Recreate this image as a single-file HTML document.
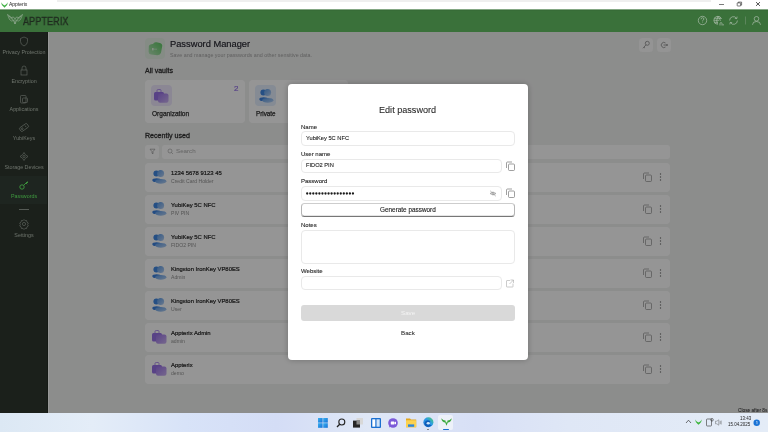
<!DOCTYPE html>
<html><head><meta charset="utf-8">
<style>
*{margin:0;padding:0;box-sizing:border-box}
html,body{width:768px;height:432px;overflow:hidden;background:#f5f6f5;font-family:"Liberation Sans",sans-serif;-webkit-font-smoothing:antialiased}
.t{will-change:transform}
.a{position:absolute}
.t{position:absolute;white-space:nowrap;line-height:1}
#titlebar{left:0;top:0;width:768px;height:9px;background:#fff}
#header{left:0;top:9px;width:768px;height:23px;background:#3a713a}
#side{left:0;top:32px;width:48px;height:381px;background:#1b201b}
#main{left:48px;top:32px;width:720px;height:381px;background:#eff0ef}
#overlay{left:48px;top:32px;width:720px;height:381px;background:rgba(0,0,0,0.41)}
#taskbar{left:0;top:413px;width:768px;height:19px;background:linear-gradient(90deg,#dce8f4 0%,#e4edf8 12%,#d8e3f8 24%,#d4ddf6 36%,#dfe7f6 48%,#d8e0f6 62%,#dfe7f6 74%,#e4ecf7 100%)}
.sl{font-size:5.35px;color:#535853;text-align:center;width:48px;left:0}
.card{position:absolute;background:#fefefe;border-radius:4px}
.row{position:absolute;left:145px;width:525px;height:29px;background:#fcfcfc;border-radius:4px}
.rt{font-size:5.9px;color:#262626;-webkit-text-stroke:0.2px #262626}
.rs{font-size:5.1px;color:#8f8f8f}
#modal{left:288px;top:84px;width:240px;height:276px;background:#fff;border-radius:4px;box-shadow:0 0 6px rgba(0,0,0,0.25)}
.ml{font-size:6px;color:#2a2a2a;-webkit-text-stroke:0.12px #2a2a2a}
.inp{position:absolute;border:1px solid #e9e9e9;border-radius:4px;background:#fff}
.it{font-size:5.7px;color:#222;-webkit-text-stroke:0.1px #222}
</style></head><body>
<div id="titlebar" class="a">
<svg class="a" style="left:0.5px;top:1.5px" width="7" height="6" viewBox="0 0 7 6"><path d="M0.2 0.2 Q1.5 2.5 3.5 3.5 Q5.5 2.5 6.8 0.2 Q6.6 3.6 4.6 4.6 L3.5 5.8 L2.4 4.6 Q0.4 3.6 0.2 0.2 Z" fill="#3fb043"/></svg>
<div class="t" style="left:9px;top:2px;font-size:5px;color:#222">Appterix</div>
<div class="a" style="left:57px;top:0;width:654px;height:1.5px;background:#efefef"></div>
<svg class="a" style="left:715px;top:0" width="53" height="9" viewBox="0 0 53 9"><g fill="none" stroke="#222" stroke-width="0.6">
<path d="M4 4.5 H9"/>
<rect x="22.2" y="2.9" width="3.4" height="3.1" rx="0.4"/><path d="M23.2 2.9 V2.1 H26.6 V5.1 H25.6"/>
<path d="M41 2.1 L45 5.9 M45 2.1 L41 5.9" stroke-width="0.75"/></g></svg>
</div>
<div id="header" class="a">
<div class="a" style="left:0;top:0;width:768px;height:1px;background:#84a784"></div><div class="a" style="left:0;top:1px;width:768px;height:1px;background:#376c37"></div>
<svg class="a" style="left:6.5px;top:5.3px" width="16" height="11" viewBox="0 0 16 11"><g fill="none" stroke="#a9b7a9" stroke-width="0.55" stroke-linejoin="round">
<path d="M0.5 0.5 L4.5 3.5 L6.5 3 L8 5 L9.5 3 L11.5 3.5 L15.5 0.5 L13.5 5.5 L11.5 7 L9.5 6.5 L8 10 L6.5 6.5 L4.5 7 L2.5 5.5 Z"/>
<path d="M2 2 L5 5.5 M14 2 L11 5.5 M4.5 3.5 L6.5 6.5 M11.5 3.5 L9.5 6.5 M8 5 V10"/>
</g></svg>
<div class="t" style="left:23px;top:7.5px;font-size:10px;color:#1f2a1f;letter-spacing:0.15px;-webkit-text-stroke:0.35px #1f2a1f;transform:scaleX(0.9);transform-origin:0 0">APPTERIX</div>
<svg class="a" style="left:697px;top:5px" width="70" height="13" viewBox="0 0 70 13">
<g fill="none" stroke="#b3c3b3" stroke-width="0.65">
<circle cx="5.5" cy="6.5" r="4.2"/>
<path d="M4.1 5.3 Q4.1 3.7 5.5 3.7 Q6.9 3.7 6.9 5 Q6.9 5.9 5.6 6.6 V7.4 M5.6 8.5 V9"/>
<path d="M24.6 5 A4 4 0 1 0 20.5 10.3"/><path d="M17 6.3 H22 M21 2.3 Q18.6 6.3 20.5 10.3 M21 2.3 Q23.2 5 23.4 7 M17.6 4.3 H24.2 M17.6 8.3 H21"/>
<path d="M23 11.5 V9.6 Q23 8.6 24 8.6 Q25 8.6 25 9.6 V11.5 M26.2 11.5 V10"/>
<g transform="translate(1,0)"><path d="M31.6 6.5 A3.8 3.8 0 0 1 38.6 4.4"/><path d="M39.1 2.6 L38.8 4.6 L36.8 4.4"/>
<path d="M39.4 6.5 A3.8 3.8 0 0 1 32.4 8.6"/><path d="M31.9 10.4 L32.2 8.4 L34.2 8.6"/></g>
</g>
<path d="M48.5 2.5 V10.5" stroke="#7f9d7f" stroke-width="0.5"/>
<g fill="none" stroke="#b3c3b3" stroke-width="0.65"><circle cx="59.5" cy="4.8" r="2.3"/><path d="M55.5 10.8 Q55.5 7.5 59.5 7.5 Q63.5 7.5 63.5 10.8"/></g>
</svg>
</div>
<div id="side" class="a">
<div class="a" style="left:0;top:143.5px;width:48px;height:28.5px;background:#1e2520"></div>
<div class="t sl" style="top:17.5px;color:#70766f">Privacy Protection</div>
<div class="t sl" style="top:46.5px;color:#70766f">Encryption</div>
<div class="t sl" style="top:74.9px;color:#70766f">Applications</div>
<div class="t sl" style="top:103.5px;color:#70766f">YubiKeys</div>
<div class="t sl" style="top:132.8px;color:#70766f">Storage Devices</div>
<div class="t sl" style="top:161.5px;color:#3f9a3f">Passwords</div>
<div class="t sl" style="top:200.5px;color:#70766f">Settings</div>
<div class="a" style="left:19px;top:177px;width:10px;height:0.6px;background:#555a55"></div>
<svg class="a" style="left:0;top:0" width="48" height="210" viewBox="0 0 48 210"><g fill="none" stroke="#5c625c" stroke-width="0.7">
<path d="M24 5 L20.5 6.5 V9.5 Q20.5 12.5 24 14 Q27.5 12.5 27.5 9.5 V6.5 Z"/>
<path d="M22 38 V36 Q22 34 24 34 Q26 34 26 36 V38"/><rect x="21" y="38" width="6" height="5"/>
<rect x="20.5" y="63.5" width="5.5" height="7.5" rx="0.8"/><rect x="22.5" y="66" width="5" height="4.5" rx="0.8"/>
<g transform="rotate(-35 24 95.5)"><rect x="19.5" y="93.3" width="9" height="4.4" rx="1"/><circle cx="21.8" cy="95.5" r="0.9"/><path d="M26 94.5 V96.5"/></g>
<path d="M24 120.5 L25.3 122.6 L28 124.5 L25.3 126.4 L24 128.5 L22.7 126.4 L20 124.5 L22.7 122.6 Z"/><circle cx="24" cy="124.5" r="1.1"/>
</g>
<g fill="none" stroke="#3f9a3f" stroke-width="0.9"><circle cx="22" cy="155" r="2.2"/><path d="M23.6 153.4 L27.5 149.5 M26 151 l1.2 1.2 M27 150 l1 1"/></g>
<g fill="none" stroke="#5c625c" stroke-width="0.7"><circle cx="24" cy="192" r="1.6"/><path d="M24 187.5 l1 1.2 l1.6 -0.2 l0.3 1.6 l1.4 0.9 l-0.7 1.5 l0.7 1.5 l-1.4 0.9 l-0.3 1.6 l-1.6 -0.2 l-1 1.2 l-1 -1.2 l-1.6 0.2 l-0.3 -1.6 l-1.4 -0.9 l0.7 -1.5 l-0.7 -1.5 l1.4 -0.9 l0.3 -1.6 l1.6 0.2 z"/></g>
</svg>
</div>
<div id="main" class="a">
<!-- header -->
<div class="a" style="left:97px;top:6px;width:20px;height:20.5px;background:#e3efe3;border-radius:4px"></div>
<svg class="a" style="left:100px;top:9.5px" width="15" height="14" viewBox="0 0 15 14"><defs><linearGradient id="pmg" x1="1" y1="0" x2="0" y2="1"><stop offset="0" stop-color="#5cc862"/><stop offset="1" stop-color="#b5e2b7"/></linearGradient></defs>
<path d="M5 2 Q6 -0.2 8.5 0.3 L12 1 Q14.6 1.6 14.2 4.2 L13 10.8 Q12.3 13.3 9.2 13.2 L3 12.6 Q0.6 12.2 0.6 9.8 L0.8 4.6 Q1 2.2 5 2 Z" fill="url(#pmg)"/>
<rect x="4" y="6" width="1.6" height="2.4" fill="#dff2df"/><path d="M5.6 7.2 H9" stroke="#dff2df" stroke-width="0.6"/></svg>
<div class="t" style="left:122px;top:8px;font-size:9.3px;color:#262630;-webkit-text-stroke:0.18px #262630">Password Manager</div>
<div class="t" style="left:122px;top:21.3px;font-size:5.35px;color:#a3a3a3">Save and manage your passwords and other sensitive data.</div>
<div class="t" style="left:97px;top:35px;font-size:7px;color:#333;-webkit-text-stroke:0.3px #333">All vaults</div>
<!-- vault cards -->
<div class="card" style="left:97px;top:47.5px;width:100px;height:43.5px"></div>
<div class="card" style="left:201px;top:47.5px;width:99px;height:43.5px"></div>
<div class="a" style="left:103.3px;top:53px;width:20.7px;height:21px;background:#ece6fb;border-radius:4px"></div>
<div class="a" style="left:207.3px;top:53px;width:20.7px;height:21px;background:#e2ecfb;border-radius:4px"></div>
<svg class="a" style="left:106.4px;top:57px" width="15" height="14" viewBox="0 0 15 14"><defs><linearGradient id="pbv" x1="0" y1="0" x2="1" y2="1"><stop offset="0" stop-color="#9a72e6"/><stop offset="1" stop-color="#c8b0f0"/></linearGradient></defs>
<path d="M3 3 V1.5 Q3 0.5 4.2 0.5 H6 Q7 0.5 7 1.5 V3" fill="none" stroke="#a884ea" stroke-width="0.9"/>
<rect x="0" y="3" width="10" height="8.5" rx="1.5" fill="#9670e4"/><rect x="4" y="4.5" width="10.5" height="9.3" rx="2" fill="url(#pbv)"/></svg>
<svg class="a" style="left:210.5px;top:57px" width="15" height="15" viewBox="0 0 15 15"><defs><linearGradient id="bpv" x1="0" y1="0" x2="1" y2="1"><stop offset="0" stop-color="#5a9ae6"/><stop offset="1" stop-color="#b4cff2"/></linearGradient></defs>
<circle cx="4.4" cy="3.6" r="3" fill="#3f86e0"/><circle cx="8.6" cy="3.6" r="3.5" fill="url(#bpv)"/>
<ellipse cx="4.6" cy="10.2" rx="4.3" ry="1.9" fill="#3a80de"/><ellipse cx="8.8" cy="11.3" rx="5.6" ry="2.4" fill="url(#bpv)"/></svg>
<div class="t" style="left:103.5px;top:78.6px;font-size:6.55px;color:#333;-webkit-text-stroke:0.25px #333">Organization</div>
<div class="t" style="left:207.5px;top:78.6px;font-size:6.3px;color:#333;-webkit-text-stroke:0.25px #333">Private</div>
<div class="t" style="left:186.2px;top:53.2px;font-size:8px;color:#9470e6;-webkit-text-stroke:0.2px #9470e6">2</div>
<div class="t" style="left:97px;top:101px;font-size:7.1px;color:#333;-webkit-text-stroke:0.3px #333">Recently used</div>
<!-- filter + search -->
<div class="card" style="left:97px;top:112.5px;width:14px;height:14px;border-radius:3px"></div>
<div class="card" style="left:114px;top:112.5px;width:508px;height:14px;border-radius:3px"></div>
<svg class="a" style="left:101px;top:116px" width="7" height="7" viewBox="0 0 7 7"><path d="M1 1.2 H6 L4 3.6 V5.8 L3 5.2 V3.6 Z" fill="none" stroke="#888" stroke-width="0.6"/></svg>
<svg class="a" style="left:119.3px;top:116px" width="7" height="7" viewBox="0 0 7 7"><circle cx="3" cy="3" r="2" fill="none" stroke="#999" stroke-width="0.6"/><path d="M4.5 4.5 L6 6" stroke="#999" stroke-width="0.6"/></svg>
<div class="t" style="left:127.5px;top:116px;font-size:6.2px;color:#aaa">Search</div>
<div class="card" style="left:97px;top:131.0px;width:525px;height:29px"></div>
<svg class="a" style="left:104px;top:138.0px" width="15" height="15" viewBox="0 0 15 15"><defs><linearGradient id="bp0" x1="0" y1="0" x2="1" y2="1"><stop offset="0" stop-color="#5a9ae6"/><stop offset="1" stop-color="#b4cff2"/></linearGradient></defs>
<circle cx="4.4" cy="3.6" r="3" fill="#3f86e0"/><circle cx="8.6" cy="3.6" r="3.5" fill="url(#bp0)"/>
<ellipse cx="4.6" cy="10.2" rx="4.3" ry="1.9" fill="#3a80de"/><ellipse cx="8.8" cy="11.3" rx="5.6" ry="2.4" fill="url(#bp0)"/></svg>
<div class="t rt" style="left:122.5px;top:138.5px">1234 5678 9123 45</div>
<div class="t rs" style="left:122.5px;top:146.5px">Credit Card Holder</div>
<svg class="a" style="left:594px;top:139.5px" width="22" height="12" viewBox="0 0 22 12"><g fill="none" stroke="#8c8c8c" stroke-width="0.7"><path d="M1.5 7 V2 Q1.5 1 2.5 1 H7"/><rect x="3.5" y="3" width="6" height="6.5" rx="1"/></g><g fill="#707070"><circle cx="18.5" cy="2" r="0.7"/><circle cx="18.5" cy="5" r="0.7"/><circle cx="18.5" cy="8" r="0.7"/></g></svg>
<div class="card" style="left:97px;top:163.0px;width:525px;height:29px"></div>
<svg class="a" style="left:104px;top:170.0px" width="15" height="15" viewBox="0 0 15 15"><defs><linearGradient id="bp1" x1="0" y1="0" x2="1" y2="1"><stop offset="0" stop-color="#5a9ae6"/><stop offset="1" stop-color="#b4cff2"/></linearGradient></defs>
<circle cx="4.4" cy="3.6" r="3" fill="#3f86e0"/><circle cx="8.6" cy="3.6" r="3.5" fill="url(#bp1)"/>
<ellipse cx="4.6" cy="10.2" rx="4.3" ry="1.9" fill="#3a80de"/><ellipse cx="8.8" cy="11.3" rx="5.6" ry="2.4" fill="url(#bp1)"/></svg>
<div class="t rt" style="left:122.5px;top:170.5px">YubiKey 5C NFC</div>
<div class="t rs" style="left:122.5px;top:178.5px">PIV PIN</div>
<svg class="a" style="left:594px;top:171.5px" width="22" height="12" viewBox="0 0 22 12"><g fill="none" stroke="#8c8c8c" stroke-width="0.7"><path d="M1.5 7 V2 Q1.5 1 2.5 1 H7"/><rect x="3.5" y="3" width="6" height="6.5" rx="1"/></g><g fill="#707070"><circle cx="18.5" cy="2" r="0.7"/><circle cx="18.5" cy="5" r="0.7"/><circle cx="18.5" cy="8" r="0.7"/></g></svg>
<div class="card" style="left:97px;top:195.0px;width:525px;height:29px"></div>
<svg class="a" style="left:104px;top:202.0px" width="15" height="15" viewBox="0 0 15 15"><defs><linearGradient id="bp2" x1="0" y1="0" x2="1" y2="1"><stop offset="0" stop-color="#5a9ae6"/><stop offset="1" stop-color="#b4cff2"/></linearGradient></defs>
<circle cx="4.4" cy="3.6" r="3" fill="#3f86e0"/><circle cx="8.6" cy="3.6" r="3.5" fill="url(#bp2)"/>
<ellipse cx="4.6" cy="10.2" rx="4.3" ry="1.9" fill="#3a80de"/><ellipse cx="8.8" cy="11.3" rx="5.6" ry="2.4" fill="url(#bp2)"/></svg>
<div class="t rt" style="left:122.5px;top:202.5px">YubiKey 5C NFC</div>
<div class="t rs" style="left:122.5px;top:210.5px">FIDO2 PIN</div>
<svg class="a" style="left:594px;top:203.5px" width="22" height="12" viewBox="0 0 22 12"><g fill="none" stroke="#8c8c8c" stroke-width="0.7"><path d="M1.5 7 V2 Q1.5 1 2.5 1 H7"/><rect x="3.5" y="3" width="6" height="6.5" rx="1"/></g><g fill="#707070"><circle cx="18.5" cy="2" r="0.7"/><circle cx="18.5" cy="5" r="0.7"/><circle cx="18.5" cy="8" r="0.7"/></g></svg>
<div class="card" style="left:97px;top:227.0px;width:525px;height:29px"></div>
<svg class="a" style="left:104px;top:234.0px" width="15" height="15" viewBox="0 0 15 15"><defs><linearGradient id="bp3" x1="0" y1="0" x2="1" y2="1"><stop offset="0" stop-color="#5a9ae6"/><stop offset="1" stop-color="#b4cff2"/></linearGradient></defs>
<circle cx="4.4" cy="3.6" r="3" fill="#3f86e0"/><circle cx="8.6" cy="3.6" r="3.5" fill="url(#bp3)"/>
<ellipse cx="4.6" cy="10.2" rx="4.3" ry="1.9" fill="#3a80de"/><ellipse cx="8.8" cy="11.3" rx="5.6" ry="2.4" fill="url(#bp3)"/></svg>
<div class="t rt" style="left:122.5px;top:234.5px">Kingston IronKey VP80ES</div>
<div class="t rs" style="left:122.5px;top:242.5px">Admin</div>
<svg class="a" style="left:594px;top:235.5px" width="22" height="12" viewBox="0 0 22 12"><g fill="none" stroke="#8c8c8c" stroke-width="0.7"><path d="M1.5 7 V2 Q1.5 1 2.5 1 H7"/><rect x="3.5" y="3" width="6" height="6.5" rx="1"/></g><g fill="#707070"><circle cx="18.5" cy="2" r="0.7"/><circle cx="18.5" cy="5" r="0.7"/><circle cx="18.5" cy="8" r="0.7"/></g></svg>
<div class="card" style="left:97px;top:259.0px;width:525px;height:29px"></div>
<svg class="a" style="left:104px;top:266.0px" width="15" height="15" viewBox="0 0 15 15"><defs><linearGradient id="bp4" x1="0" y1="0" x2="1" y2="1"><stop offset="0" stop-color="#5a9ae6"/><stop offset="1" stop-color="#b4cff2"/></linearGradient></defs>
<circle cx="4.4" cy="3.6" r="3" fill="#3f86e0"/><circle cx="8.6" cy="3.6" r="3.5" fill="url(#bp4)"/>
<ellipse cx="4.6" cy="10.2" rx="4.3" ry="1.9" fill="#3a80de"/><ellipse cx="8.8" cy="11.3" rx="5.6" ry="2.4" fill="url(#bp4)"/></svg>
<div class="t rt" style="left:122.5px;top:266.5px">Kingston IronKey VP80ES</div>
<div class="t rs" style="left:122.5px;top:274.5px">User</div>
<svg class="a" style="left:594px;top:267.5px" width="22" height="12" viewBox="0 0 22 12"><g fill="none" stroke="#8c8c8c" stroke-width="0.7"><path d="M1.5 7 V2 Q1.5 1 2.5 1 H7"/><rect x="3.5" y="3" width="6" height="6.5" rx="1"/></g><g fill="#707070"><circle cx="18.5" cy="2" r="0.7"/><circle cx="18.5" cy="5" r="0.7"/><circle cx="18.5" cy="8" r="0.7"/></g></svg>
<div class="card" style="left:97px;top:291.0px;width:525px;height:29px"></div>
<svg class="a" style="left:104px;top:298.0px" width="15" height="14" viewBox="0 0 15 14"><defs><linearGradient id="pb5" x1="0" y1="0" x2="1" y2="1"><stop offset="0" stop-color="#9a72e6"/><stop offset="1" stop-color="#c8b0f0"/></linearGradient></defs>
<path d="M3 3 V1.5 Q3 0.5 4.2 0.5 H6 Q7 0.5 7 1.5 V3" fill="none" stroke="#a884ea" stroke-width="0.9"/>
<rect x="0" y="3" width="10" height="8.5" rx="1.5" fill="#9670e4"/><rect x="4" y="4.5" width="10.5" height="9.3" rx="2" fill="url(#pb5)"/></svg>
<div class="t rt" style="left:122.5px;top:298.5px">Appterix Admin</div>
<div class="t rs" style="left:122.5px;top:306.5px">admin</div>
<svg class="a" style="left:594px;top:299.5px" width="22" height="12" viewBox="0 0 22 12"><g fill="none" stroke="#8c8c8c" stroke-width="0.7"><path d="M1.5 7 V2 Q1.5 1 2.5 1 H7"/><rect x="3.5" y="3" width="6" height="6.5" rx="1"/></g><g fill="#707070"><circle cx="18.5" cy="2" r="0.7"/><circle cx="18.5" cy="5" r="0.7"/><circle cx="18.5" cy="8" r="0.7"/></g></svg>
<div class="card" style="left:97px;top:323.0px;width:525px;height:29px"></div>
<svg class="a" style="left:104px;top:330.0px" width="15" height="14" viewBox="0 0 15 14"><defs><linearGradient id="pb6" x1="0" y1="0" x2="1" y2="1"><stop offset="0" stop-color="#9a72e6"/><stop offset="1" stop-color="#c8b0f0"/></linearGradient></defs>
<path d="M3 3 V1.5 Q3 0.5 4.2 0.5 H6 Q7 0.5 7 1.5 V3" fill="none" stroke="#a884ea" stroke-width="0.9"/>
<rect x="0" y="3" width="10" height="8.5" rx="1.5" fill="#9670e4"/><rect x="4" y="4.5" width="10.5" height="9.3" rx="2" fill="url(#pb6)"/></svg>
<div class="t rt" style="left:122.5px;top:330.5px">Appterix</div>
<div class="t rs" style="left:122.5px;top:338.5px">demo</div>
<svg class="a" style="left:594px;top:331.5px" width="22" height="12" viewBox="0 0 22 12"><g fill="none" stroke="#8c8c8c" stroke-width="0.7"><path d="M1.5 7 V2 Q1.5 1 2.5 1 H7"/><rect x="3.5" y="3" width="6" height="6.5" rx="1"/></g><g fill="#707070"><circle cx="18.5" cy="2" r="0.7"/><circle cx="18.5" cy="5" r="0.7"/><circle cx="18.5" cy="8" r="0.7"/></g></svg>
<div class="card" style="left:591px;top:6px;width:14.2px;height:14px;border-radius:3.5px;background:#fbfbfb"></div>
<div class="card" style="left:609.2px;top:6px;width:14px;height:14px;border-radius:3.5px;background:#fbfbfb"></div>
<svg class="a" style="left:591px;top:6px" width="14" height="14" viewBox="0 0 14 14"><g fill="none" stroke="#8a8a8a" stroke-width="0.8"><circle cx="8.3" cy="5.3" r="2"/><path d="M7 6.8 L4 10.2 M5 9.2 L5.9 10"/></g></svg>
<svg class="a" style="left:609.2px;top:6px" width="14" height="14" viewBox="0 0 14 14"><g fill="none" stroke="#8a8a8a" stroke-width="0.8"><path d="M8.5 5 A2.6 2.6 0 1 0 8.5 9"/><path d="M6.5 7 H10.3"/><path d="M9.6 6 L10.6 7 L9.6 8" fill="#8a8a8a"/></g></svg>
</div>
<div id="overlay" class="a"></div>
<div class="a" style="left:47px;top:32px;width:1px;height:381px;background:#151a15"></div>
<div class="a" style="left:48px;top:32px;width:1px;height:381px;background:#989998"></div>
<div id="modal" class="a"><div class="a" style="left:0;top:1px">
<div class="t" style="left:91px;top:20.5px;font-size:9.1px;color:#282828;-webkit-text-stroke:0.08px #282828">Edit password</div>
<div class="t ml" style="left:13px;top:38.5px">Name</div>
<div class="inp" style="left:13px;top:46.3px;width:214px;height:14.5px"></div>
<div class="t it" style="left:17.7px;top:50.5px">YubiKey 5C NFC</div>
<div class="t ml" style="left:13px;top:66px">User name</div>
<div class="inp" style="left:13px;top:74.2px;width:201.4px;height:14px"></div>
<div class="t it" style="left:17.7px;top:78px">FIDO2 PIN</div>
<div class="t ml" style="left:13px;top:93px">Password</div>
<div class="inp" style="left:13px;top:101.4px;width:201.4px;height:14.2px"></div>
<svg class="a" style="left:18.3px;top:106.7px" width="50" height="3" viewBox="0 0 50 3"><g fill="#1a1a1a"><circle cx="1.20" cy="1.5" r="1.15"/><circle cx="4.25" cy="1.5" r="1.15"/><circle cx="7.30" cy="1.5" r="1.15"/><circle cx="10.35" cy="1.5" r="1.15"/><circle cx="13.40" cy="1.5" r="1.15"/><circle cx="16.45" cy="1.5" r="1.15"/><circle cx="19.50" cy="1.5" r="1.15"/><circle cx="22.55" cy="1.5" r="1.15"/><circle cx="25.60" cy="1.5" r="1.15"/><circle cx="28.65" cy="1.5" r="1.15"/><circle cx="31.70" cy="1.5" r="1.15"/><circle cx="34.75" cy="1.5" r="1.15"/><circle cx="37.80" cy="1.5" r="1.15"/><circle cx="40.85" cy="1.5" r="1.15"/><circle cx="43.90" cy="1.5" r="1.15"/><circle cx="46.95" cy="1.5" r="1.15"/></g></svg>
<div class="a" style="left:13px;top:118.4px;width:214px;height:13.6px;border:1px solid #b5b5b5;border-top:1.5px solid #cdcdcd;border-bottom:1.2px solid #777;border-radius:3.5px;box-shadow:inset 0 -0.3px 0 #999"></div>
<div class="t" style="left:92px;top:122px;font-size:6.4px;color:#222;-webkit-text-stroke:0.12px #222">Generate password</div>
<div class="t ml" style="left:13px;top:136.5px">Notes</div>
<div class="inp" style="left:13px;top:144.8px;width:214px;height:34px"></div>
<div class="t ml" style="left:13px;top:183px">Website</div>
<div class="inp" style="left:13px;top:191.3px;width:201px;height:14.2px"></div>
<div class="a" style="left:13px;top:219.8px;width:214px;height:16.2px;background:#d9d9d9;border-radius:3px"></div>
<div class="t" style="left:112.5px;top:224.5px;font-size:6.2px;color:#f4f4f4">Save</div>
<div class="t" style="left:112.8px;top:245px;font-size:6.2px;color:#222;-webkit-text-stroke:0.05px #222">Back</div>
<svg class="a" style="left:217px;top:76px" width="11" height="11" viewBox="0 0 11 11"><g fill="none" stroke="#777" stroke-width="0.7"><path d="M1.5 7 V2 Q1.5 1 2.5 1 H7"/><rect x="3.5" y="3" width="6" height="6.5" rx="1"/></g></svg>
<svg class="a" style="left:217px;top:103px" width="11" height="11" viewBox="0 0 11 11"><g fill="none" stroke="#777" stroke-width="0.7"><path d="M1.5 7 V2 Q1.5 1 2.5 1 H7"/><rect x="3.5" y="3" width="6" height="6.5" rx="1"/></g></svg>
<svg class="a" style="left:201px;top:105px" width="8" height="7" viewBox="0 0 8 7"><g fill="none" stroke="#888" stroke-width="0.6"><path d="M1 3.5 Q4 0.5 7 3.5 Q4 6.5 1 3.5 Z"/><circle cx="4" cy="3.5" r="1"/><path d="M1.2 0.8 L6.8 6.2"/></g></svg>
<svg class="a" style="left:217px;top:194px" width="10" height="9" viewBox="0 0 10 9"><g fill="none" stroke="#aaa" stroke-width="0.6"><path d="M5 1.5 H2 Q1.5 1.5 1.5 2 V7.5 Q1.5 8 2 8 H7.5 Q8 8 8 7.5 V4.5 M5.5 1 H8.5 V4 M8.5 1 L4.5 5"/></g></svg>
</div></div>
<div id="taskbar" class="a">
<svg class="a" style="left:318px;top:5px" width="10" height="10" viewBox="0 0 10 10"><defs><linearGradient id="wg" x1="0" y1="0" x2="1" y2="1"><stop offset="0" stop-color="#3ab0f0"/><stop offset="1" stop-color="#1670d6"/></linearGradient></defs><g fill="url(#wg)"><rect x="0" y="0" width="4.6" height="4.6"/><rect x="5.2" y="0" width="4.6" height="4.6"/><rect x="0" y="5.2" width="4.6" height="4.6"/><rect x="5.2" y="5.2" width="4.6" height="4.6"/></g></svg>
<svg class="a" style="left:336px;top:5px" width="10" height="10" viewBox="0 0 10 10"><circle cx="5.8" cy="4" r="3" fill="none" stroke="#222" stroke-width="1.1"/><path d="M3.7 6.2 L1 9" stroke="#222" stroke-width="1.3"/></svg>
<svg class="a" style="left:353px;top:5px" width="10" height="10" viewBox="0 0 10 10"><rect x="3.5" y="0" width="6.5" height="6.5" fill="#d8d8d8"/><rect x="0" y="2.6" width="7" height="7" fill="#262626"/><rect x="3.5" y="2.6" width="3.5" height="3.9" fill="#8a8a8a"/></svg>
<svg class="a" style="left:371px;top:5px" width="10" height="10" viewBox="0 0 10 10"><rect x="0" y="0" width="10" height="10" rx="1" fill="#1a6fd0"/><rect x="1.3" y="1.3" width="3" height="7.4" fill="#fff"/><rect x="5.5" y="1.3" width="3.2" height="7.4" fill="#cfe3f8"/></svg>
<svg class="a" style="left:388px;top:5px" width="11" height="10" viewBox="0 0 11 10"><circle cx="5" cy="5" r="4.8" fill="#7b5ad8"/><path d="M1 9.5 L2 7 L3 8.5 Z" fill="#7b5ad8"/><rect x="2.8" y="3.5" width="3.6" height="3" rx="0.6" fill="#fff"/><path d="M6.4 4.5 L8 3.5 V6.5 L6.4 5.5 Z" fill="#fff"/></svg>
<svg class="a" style="left:405.8px;top:4.6px" width="11" height="10" viewBox="0 0 11 10"><path d="M0 0.5 H4 L5 1.6 H10.2 V9.2 H0 Z" fill="#e2a61e"/><rect x="0" y="2.2" width="10.2" height="7" rx="0.5" fill="#fcd24f"/><rect x="2" y="6.4" width="6.2" height="2.4" fill="#2e86dc"/></svg>
<svg class="a" style="left:423.2px;top:4.2px" width="11" height="11" viewBox="0 0 11 11"><defs><linearGradient id="eg" x1="0" y1="1" x2="1" y2="0"><stop offset="0" stop-color="#1a6fd0"/><stop offset="0.55" stop-color="#2b9be6"/><stop offset="1" stop-color="#4fd06a"/></linearGradient></defs>
<circle cx="5.4" cy="5.3" r="5" fill="url(#eg)"/>
<path d="M1.5 6.5 Q2.3 3.2 5 3.2 Q7.2 3.3 7.4 5 Q6 5.2 6 6.5 Q6.3 7.8 8.5 8.2 Q6.8 10 4.5 10 Q1.8 9.2 1.5 6.5 Z" fill="#0f5cb8"/>
<ellipse cx="5.2" cy="6.3" rx="1.6" ry="1.3" fill="#cfe6fa"/></svg>
<div class="a" style="left:427px;top:16px;width:2px;height:1px;background:#777;border-radius:1px"></div>
<div class="a" style="left:438.3px;top:2px;width:14.8px;height:14.8px;background:#edf1f9;border-radius:2px"></div>
<svg class="a" style="left:440.5px;top:4.8px" width="11" height="8" viewBox="0 0 11 8"><path d="M0.2 0.2 Q1.2 4.5 4.2 4.6 L5.5 7.8 L6.8 4.6 Q9.8 4.5 10.8 0.2 Q8.5 2.8 6.6 2.6 L5.5 4 L4.4 2.6 Q2.5 2.8 0.2 0.2 Z" fill="#3aa83e"/><circle cx="5.5" cy="3.6" r="0.9" fill="#e8f5e8"/></svg>
<div class="a" style="left:442.8px;top:16px;width:6.2px;height:1.1px;background:#1a6fd0;border-radius:1px"></div>
<svg class="a" style="left:685px;top:6px" width="7" height="5" viewBox="0 0 7 5"><path d="M1 4 L3.5 1.2 L6 4" fill="none" stroke="#333" stroke-width="0.7"/></svg>
<svg class="a" style="left:695px;top:5.5px" width="7" height="6" viewBox="0 0 7 6"><path d="M0.2 0.6 Q1.6 3 3.5 3.4 Q5.4 3 6.8 0.6 Q6.5 4 4.6 4.7 L3.5 5.8 L2.4 4.7 Q0.5 4 0.2 0.6 Z" fill="#3bb53b"/></svg>
<svg class="a" style="left:706px;top:4.5px" width="16" height="9" viewBox="0 0 16 9"><g fill="none" stroke="#333" stroke-width="0.6"><rect x="0.5" y="1" width="5" height="7" rx="0.7"/><circle cx="6" cy="1.8" r="1.3"/></g><g fill="none" stroke="#555" stroke-width="0.45"><path d="M9.5 3.2 H10.8 L12.8 1.8 V7.2 L10.8 5.8 H9.5 Z M14.2 3 V6 M15.2 2.5 V6.5"/></g></svg>
<div class="t" style="left:739.8px;top:3.7px;font-size:4.45px;color:#1a1a1a">13:43</div>
<div class="t" style="left:728px;top:10.1px;font-size:4.45px;color:#222">15.04.2025</div>
<svg class="a" style="left:753px;top:5.5px" width="8" height="8" viewBox="0 0 8 8"><circle cx="3.7" cy="3.7" r="3.2" fill="#1a73d6"/><path d="M3.3 2.6 L4 2.2 V5.2" fill="none" stroke="#fff" stroke-width="0.55"/></svg>
</div>
<div class="t" style="left:737.5px;top:408.6px;font-size:4.75px;color:#2a2a2a;-webkit-text-stroke:0.1px #2a2a2a">Close after 8s</div>
</body></html>
